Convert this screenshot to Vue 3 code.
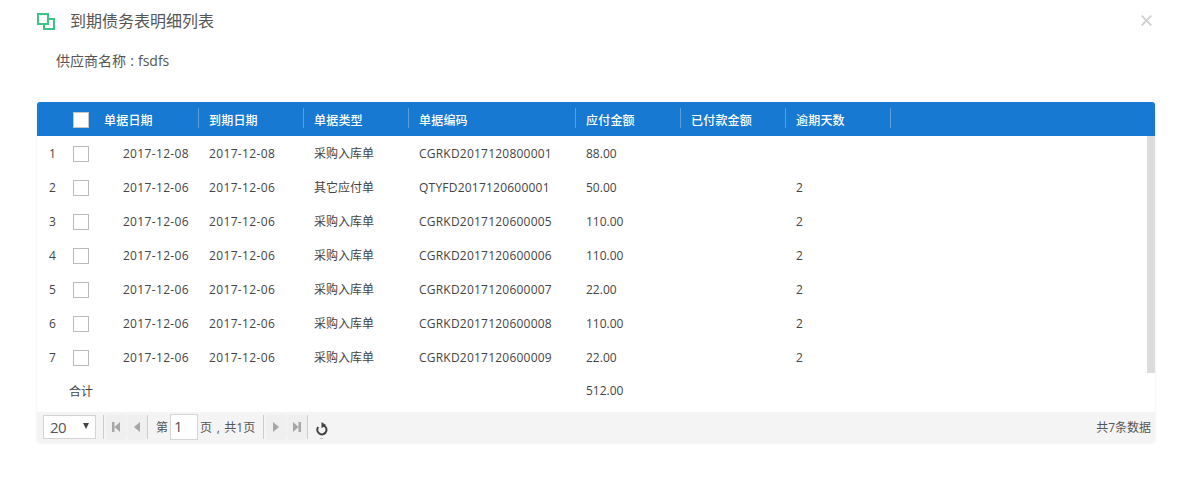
<script setup>
const rows = [
  ['1', '2017-12-08', '2017-12-08', '采购入库单', 'CGRKD2017120800001', '88.00', '', ''],
  ['2', '2017-12-06', '2017-12-06', '其它应付单', 'QTYFD2017120600001', '50.00', '', '2'],
  ['3', '2017-12-06', '2017-12-06', '采购入库单', 'CGRKD2017120600005', '110.00', '', '2'],
  ['4', '2017-12-06', '2017-12-06', '采购入库单', 'CGRKD2017120600006', '110.00', '', '2'],
  ['5', '2017-12-06', '2017-12-06', '采购入库单', 'CGRKD2017120600007', '22.00', '', '2'],
  ['6', '2017-12-06', '2017-12-06', '采购入库单', 'CGRKD2017120600008', '110.00', '', '2'],
  ['7', '2017-12-06', '2017-12-06', '采购入库单', 'CGRKD2017120600009', '22.00', '', '2']
]
const heads = ['单据日期', '到期日期', '单据类型', '单据编码', '应付金额', '已付款金额', '逾期天数']
</script>

<template>
  <div class="dialog">
    <div class="title-bar">
      <svg class="title-icon" width="18" height="17" viewBox="0 0 18 17" fill="none" stroke="#3cc385" stroke-width="2">
        <rect x="1" y="1" width="10" height="10" />
        <path d="M11 6h6v10H7v-5" />
      </svg>
      <span class="title">到期债务表明细列表</span>
      <svg class="close" width="11" height="11" viewBox="0 0 11 11" stroke="#cfcfcf" stroke-width="1.8">
        <path d="M.7.7l9.6 9.6M10.3.7L.7 10.3" />
      </svg>
    </div>
    <div class="supplier">供应商名称 : fsdfs</div>

    <div class="grid">
      <div class="head row">
        <div class="c-idx"></div>
        <div class="c-chk"><span class="box head-box"></span></div>
        <div v-for="(h, i) in heads" :key="h" class="hcell" :class="'w' + i">{{ h }}</div>
      </div>

      <div class="body">
        <div class="rows">
          <div v-for="r in rows" :key="r[0]" class="row line">
            <div class="c-idx">{{ r[0] }}</div>
            <div class="c-chk"><span class="box"></span></div>
            <div class="cell w0 right date">{{ r[1] }}</div>
            <div class="cell w1 date">{{ r[2] }}</div>
            <div class="cell w2">{{ r[3] }}</div>
            <div class="cell w3 code">{{ r[4] }}</div>
            <div class="cell w4">{{ r[5] }}</div>
            <div class="cell w5">{{ r[6] }}</div>
            <div class="cell w6">{{ r[7] }}</div>
          </div>
        </div>
        <div class="scrollbar"></div>
      </div>

      <div class="row total">
        <div class="total-label">合计</div>
        <div class="cell total-amount">512.00</div>
      </div>

      <div class="pager">
        <div class="size"><span class="size-num">20</span><i class="caret"></i></div>
        <span class="sep first"></span>
        <span class="btn"><svg width="8" height="10" viewBox="0 0 8 10" fill="#a6a6a6"><path d="M0 0h2.5v10H0zM8 0v10L2.5 5z" /></svg></span>
        <span class="btn"><svg width="6" height="10" viewBox="0 0 6 10" fill="#a6a6a6"><path d="M6 0v10L0 5z" /></svg></span>
        <span class="sep"></span>
        <span class="ptext di">第</span>
        <span class="page-input">1</span>
        <span class="ptext of">页 , 共1页</span>
        <span class="sep"></span>
        <span class="btn"><svg width="6" height="10" viewBox="0 0 6 10" fill="#a6a6a6"><path d="M0 0v10l6-5z" /></svg></span>
        <span class="btn"><svg width="8" height="10" viewBox="0 0 8 10" fill="#a6a6a6"><path d="M0 0v10l5.5-5zM5.5 0H8v10H5.5z" /></svg></span>
        <span class="sep"></span>
        <svg class="refresh" width="12" height="24" viewBox="0 0 12 24" fill="none">
          <path d="M6.5 10.2A4.6 4.6 0 1 1 2.2 12" stroke="#444" stroke-width="2" />
          <path d="M5.5 7v6.2L10 10z" fill="#444" />
          <rect x="4" y="23" width="3" height="1" fill="#c4c4c4" />
        </svg>
        <span class="count">共7条数据</span>
      </div>
    </div>
  </div>
</template>

<style scoped>
.dialog {
  width: 1188px;
  height: 485px;
  background: #fff;
  box-sizing: border-box;
  padding: 0 33px 0 37px;
  font-family: "Open Sans", "Noto Sans CJK SC", sans-serif;
  font-size: 12px;
  color: #444;
  overflow: hidden;
}
.title-bar {
  height: 43px;
  display: flex;
  align-items: center;
}
.title-icon { flex: none; }
.title {
  margin-left: 15px;
  font-size: 16px;
  line-height: 20px;
  margin-top: -1px;
  color: #555;
}
.close { margin-left: auto; margin-right: 3px; margin-top: -2px; }
.supplier {
  margin: 8px 0 0 19px;
  height: 20px;
  line-height: 20px;
  font-size: 14px;
  word-spacing: .5px;
  color: #555;
}
.grid {
  margin-top: 31px;
  width: 1118px;
  box-shadow: 0 1px 3px rgba(0, 0, 0, .08);
  border-radius: 3px 3px 0 0;
}
.row {
  display: flex;
  align-items: center;
  height: 34px;
}
.head {
  background: #1779d1;
  color: #fff;
  border-radius: 3px 3px 0 0;
}
.c-idx {
  width: 36px;
  flex: none;
  box-sizing: border-box;
  padding-left: 12px;
}
.c-chk {
  width: 20px;
  flex: none;
  display: flex;
  padding-top: 2px;
}
.box {
  width: 14px;
  height: 14px;
  background: #fff;
  border: 1px solid #bbb;
  display: block;
}
.head-box { border-color: #c4c4c4; }
.hcell, .cell {
  flex: none;
  box-sizing: border-box;
  padding-left: 11px;
  white-space: nowrap;
}
.hcell {
  position: relative;
  font-weight: 500;
  padding-top: 1px;
  letter-spacing: .2px;
}
.hcell::after {
  content: "";
  position: absolute;
  right: -1px;
  top: -2px;
  width: 1px;
  height: 20px;
  background: #5c9fde;
}
.w0 { width: 105px; }
.w1 { width: 105px; }
.w2 { width: 105px; }
.w3 { width: 167px; }
.w4 { width: 105px; }
.w5 { width: 105px; }
.w6 { width: 105px; }
.right {
  padding-left: 0;
  padding-right: 9px;
  text-align: right;
}
.date { letter-spacing: .35px; }
.code { letter-spacing: .22px; }
.body {
  display: flex;
  height: 237px;
}
.rows { flex: 1; min-width: 0; }
.scrollbar {
  width: 8px;
  flex: none;
  background: #dcdcdc;
}
.total {
  height: 39px;
  padding-bottom: 4px;
  box-sizing: border-box;
}
.total-label {
  width: 538px;
  flex: none;
  box-sizing: border-box;
  padding-left: 32px;
}
.total-amount { padding-left: 11px; }
.pager {
  height: 30px;
  background: #f4f4f4;
  display: flex;
  align-items: center;
  padding: 0 4px 0 6px;
}
.size {
  width: 53px;
  height: 24px;
  box-sizing: border-box;
  background: #fff;
  border: 1px solid #d4d4d4;
  display: flex;
  align-items: center;
  justify-content: space-between;
  padding: 0 6px;
  font-size: 15px;
  color: #555;
}
.size-num { letter-spacing: -.5px; }
.caret {
  width: 0;
  height: 0;
  margin-top: -2px;
  border-left: 3px solid transparent;
  border-right: 3px solid transparent;
  border-top: 6px solid #444;
}
.sep {
  width: 1px;
  height: 24px;
  background: #ccc;
  flex: none;
  margin: 0 2px;
}
.btn + .sep { margin-left: 0; }
.first { margin-left: 7px; }
.btn {
  width: 20px;
  height: 25px;
  background: #efefef;
  border-radius: 4px;
  display: flex;
  align-items: center;
  justify-content: center;
  flex: none;
}
.btn + .btn { margin-left: 1px; }
.ptext { white-space: nowrap; color: #555; }
.di { margin-left: 6px; }
.of { margin-left: 2px; margin-right: 6px; word-spacing: 1.5px; }
.page-input {
  width: 28px;
  height: 26px;
  box-sizing: border-box;
  margin-left: 2px;
  background: #fff;
  border: 1px solid #d4d4d4;
  font-size: 15px;
  line-height: 22px;
  padding-left: 3px;
  color: #555;
}
.refresh { margin-left: 6px; }
.count {
  margin-left: auto;
  color: #555;
}
</style>
